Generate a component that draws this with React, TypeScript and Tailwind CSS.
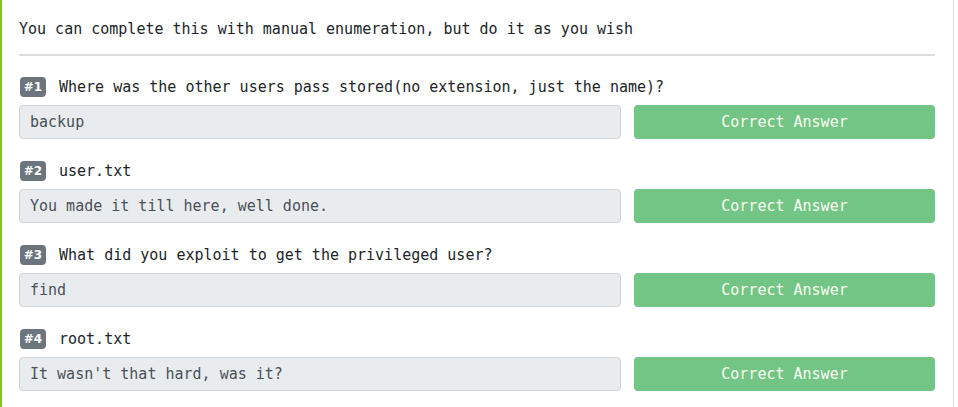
import React from "react";

const tasks = [
  {
    n: 1,
    question: "Where was the other users pass stored(no extension, just the name)?",
    answer: "backup",
  },
  { n: 2, question: "user.txt", answer: "You made it till here, well done." },
  {
    n: 3,
    question: "What did you exploit to get the privileged user?",
    answer: "find",
  },
  { n: 4, question: "root.txt", answer: "It wasn't that hard, was it?" },
];

export default function App() {
  return (
    <div className="min-h-screen w-full bg-white">
      <div
        className="w-[954px] h-[407px] border-l-2 border-r border-l-[#80c41c] border-r-[#dddddd] pl-[17px] pr-[18px] pt-[18px] text-[15px] text-[#212529]"
        style={{ fontFamily: '"DejaVu Sans Mono", "Liberation Mono", monospace' }}
      >
        <p className="leading-[22px] h-[22px]">
          You can complete this with manual enumeration, but do it as you wish
        </p>
        <hr className="mt-[14px] border-0 h-[2px] bg-[#dddddd]" />
        <div className="mt-[21px] flex flex-col gap-[22px]">
          {tasks.map((t) => (
            <div key={t.n} className="flex flex-col">
              <div className="h-[20px] flex items-center">
                <span
                  className="ml-px w-[26px] h-[20px] rounded-[4px] bg-[#6c757d] text-white text-[12px] font-bold flex items-center justify-center"
                  style={{ fontFamily: '"DejaVu Sans", "Liberation Sans", sans-serif' }}
                >
                  #{t.n}
                </span>
                <span className="ml-[13px] leading-[20px]">{t.question}</span>
              </div>
              <div className="mt-[8px] flex gap-[13px]">
                <div className="flex-1 h-[34px] rounded-[4px] border border-[#ced4da] bg-[#e9ecef] pl-[10px] flex items-center text-[#495057]">
                  {t.answer}
                </div>
                <button className="w-[301px] h-[34px] rounded-[4px] bg-[#73c586] text-[#fbfdf0] flex items-center justify-center">
                  Correct Answer
                </button>
              </div>
            </div>
          ))}
        </div>
      </div>
    </div>
  );
}
